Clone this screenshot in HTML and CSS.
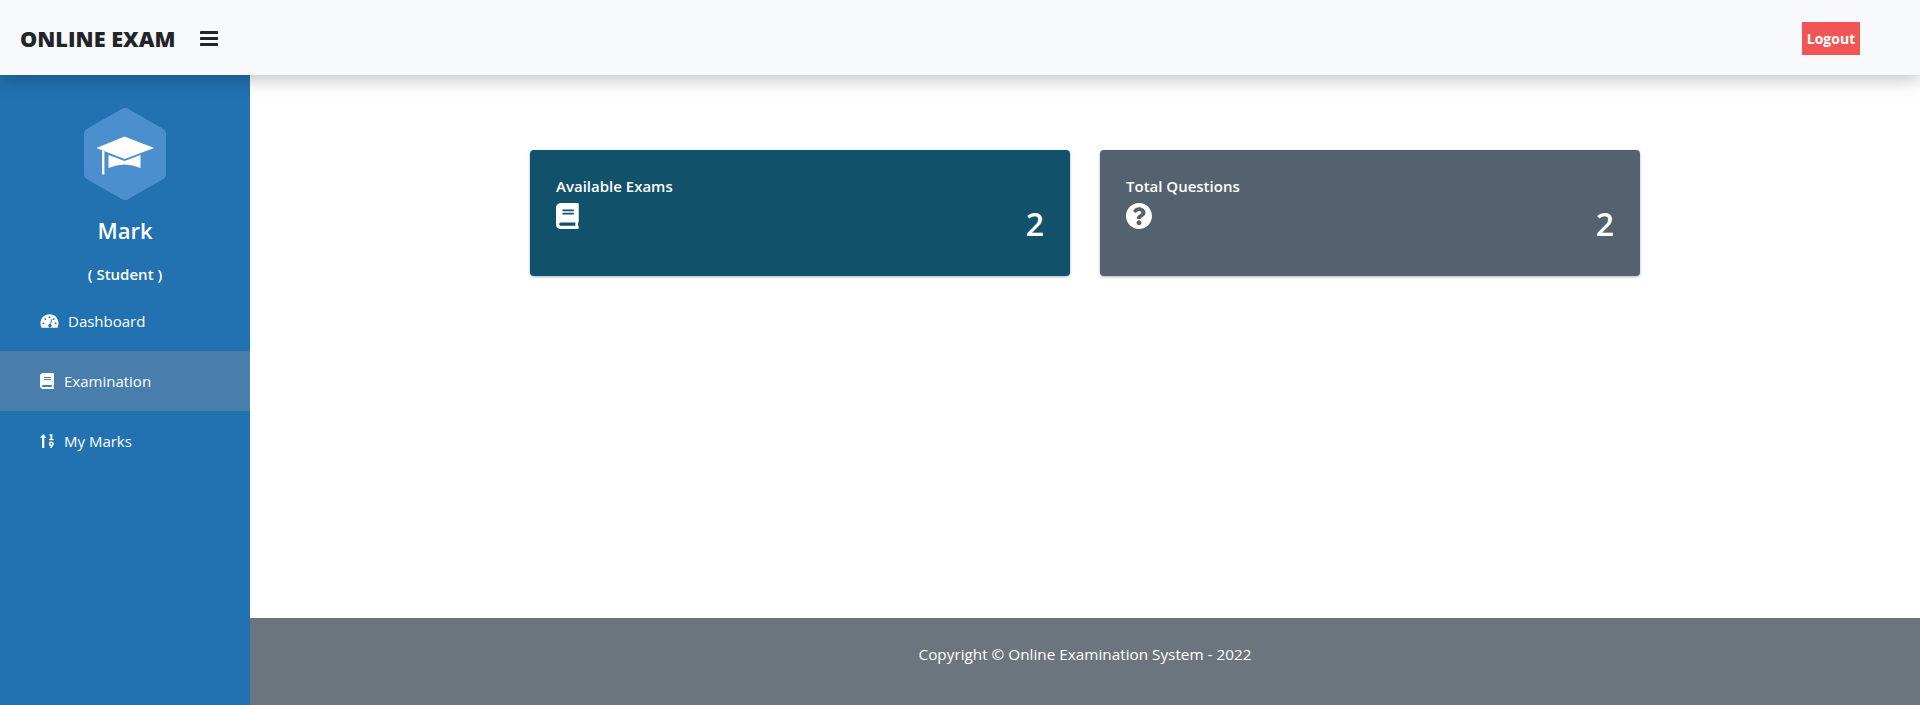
FILE: index.html
```html
<!DOCTYPE html>
<html lang="en">
<head>
    <meta charset="UTF-8">
    <meta name="viewport" content="width=device-width, initial-scale=1.0">
    <title>Online Exam</title>
    <link rel="stylesheet" href="styles.css">
</head>
<body>
    <header class="topbar">
        <span class="brand">ONLINE EXAM</span>
        <svg class="menu-icon" viewBox="0 0 18 15" aria-hidden="true">
            <rect x="0" y="0" width="18" height="3" rx="0.6"/>
            <rect x="0" y="6" width="18" height="3" rx="0.6"/>
            <rect x="0" y="12" width="18" height="3" rx="0.6"/>
        </svg>
        <a class="logout" href="#">Logout</a>
    </header>

    <div class="layout">
        <aside class="sidebar">
            <svg class="avatar" viewBox="0 0 82 92" aria-hidden="true">
                <polygon class="hex" points="41,6 76,26 76,66 41,86 6,66 6,26"/>
                <path class="cap" d="M40.500 28.500 L70 40 L40.500 51 L12.500 40 Z"/>
                <path class="cap" d="M24.500 47 L40.500 53 L56.500 47 V60 Q40.500 53 24.500 60 Z"/>
                <rect class="cap" x="18" y="42.500" width="2.400" height="24"/>
            </svg>
            <div class="user-name">Mark</div>
            <div class="user-role">( Student )</div>
            <nav class="side-nav">
                <a class="side-link" href="#">
                    <svg class="side-icon gauge" viewBox="0 0 20 16" aria-hidden="true">
                        <path fill-rule="evenodd" d="M10 1C4.600 1 .5 5.200.5 10.400c0 1.700.4 3.200 1.100 4.600h16.800c.7-1.400 1.100-2.900 1.100-4.600C19.500 5.200 15.400 1 10 1zM10 3a1 1 0 1 1 0 2 1 1 0 0 1 0-2zM5.500 5a1 1 0 1 1 0 2 1 1 0 0 1 0-2zM14.500 5a1 1 0 1 1 0 2 1 1 0 0 1 0-2zM3.500 9.500a1 1 0 1 1 0 2 1 1 0 0 1 0-2zM16.500 9.500a1 1 0 1 1 0 2 1 1 0 0 1 0-2zM12.200 5.500l.9.3-1.600 5.700a1.700 1.700 0 1 1-.9-.3z"/>
                    </svg>
                    <span>Dashboard</span>
                </a>
                <a class="side-link active" href="#">
                    <svg class="side-icon" viewBox="0 0 448 512" preserveAspectRatio="xMinYMid" aria-hidden="true">
                        <path d="M448 360V24c0-13.300-10.700-24-24-24H96C43 0 0 43 0 96v320c0 53 43 96 96 96h328c13.300 0 24-10.700 24-24v-16c0-7.500-3.500-14.300-8.900-18.700-4.200-15.400-4.200-59.300 0-74.700 5.400-4.300 8.900-11.100 8.900-18.600zM128 134c0-3.300 2.700-6 6-6h212c3.300 0 6 2.700 6 6v20c0 3.300-2.700 6-6 6H134c-3.300 0-6-2.700-6-6v-20zm0 64c0-3.300 2.700-6 6-6h212c3.300 0 6 2.700 6 6v20c0 3.300-2.700 6-6 6H134c-3.300 0-6-2.700-6-6v-20zm253.400 250H96c-17.700 0-32-14.300-32-32 0-17.600 14.400-32 32-32h285.400c-1.900 17.100-1.900 46.900 0 64z"/>
                    </svg>
                    <span>Examination</span>
                </a>
                <a class="side-link" href="#">
                    <svg class="side-icon" viewBox="0 0 15 14" preserveAspectRatio="xMinYMid" aria-hidden="true">
                        <path d="M3.200 0 6.400 3.800H4.300V14H2.100V3.800H0z"/>
                        <path d="M10 0h2.300v5h1.400v1.300H9V5h1.400V1.500H9.200z"/>
                        <path fill-rule="evenodd" d="M11.400 7.500a2.400 2.400 0 0 1 1.500 4.300L11.600 14h-1.500l.8-1.700a2.400 2.400 0 0 1 .5-4.800zm0 1.500a.9.9 0 1 0 0 1.800.9.9 0 0 0 0-1.800z"/>
                    </svg>
                    <span>My Marks</span>
                </a>
            </nav>
        </aside>

        <div class="main">
            <main class="content">
                <section class="stat-card card-teal">
                    <h2 class="stat-title">Available Exams</h2>
                    <svg class="stat-icon" viewBox="0 0 448 512" preserveAspectRatio="xMinYMid" aria-hidden="true">
                        <path d="M448 360V24c0-13.300-10.700-24-24-24H96C43 0 0 43 0 96v320c0 53 43 96 96 96h328c13.300 0 24-10.700 24-24v-16c0-7.500-3.500-14.300-8.900-18.700-4.200-15.400-4.200-59.300 0-74.700 5.400-4.300 8.900-11.100 8.900-18.600zM128 134c0-3.300 2.700-6 6-6h212c3.300 0 6 2.700 6 6v20c0 3.300-2.700 6-6 6H134c-3.300 0-6-2.700-6-6v-20zm0 64c0-3.300 2.700-6 6-6h212c3.300 0 6 2.700 6 6v20c0 3.300-2.700 6-6 6H134c-3.300 0-6-2.700-6-6v-20zm253.400 250H96c-17.700 0-32-14.300-32-32 0-17.600 14.400-32 32-32h285.400c-1.900 17.100-1.900 46.900 0 64z"/>
                    </svg>
                    <div class="stat-value">2</div>
                </section>
                <section class="stat-card card-slate">
                    <h2 class="stat-title">Total Questions</h2>
                    <svg class="stat-icon" viewBox="8 8 496 496" preserveAspectRatio="xMinYMid" aria-hidden="true">
                        <path d="M504 256c0 136.997-111.043 248-248 248S8 392.997 8 256C8 119.083 119.043 8 256 8s248 111.083 248 248zM262.655 90c-54.497 0-89.255 22.957-116.549 63.758-3.536 5.286-2.353 12.415 2.715 16.258l34.699 26.310c5.205 3.947 12.621 3.008 16.665-2.122 17.864-22.658 30.113-35.797 57.303-35.797 20.429 0 45.698 13.148 45.698 32.958 0 14.976-12.363 22.667-32.534 33.976C247.128 238.528 216 254.941 216 296v4c0 6.627 5.373 12 12 12h56c6.627 0 12-5.373 12-12v-1.333c0-28.462 83.186-29.647 83.186-106.667 0-58.002-60.165-102-116.531-102zM256 338c-25.365 0-46 20.635-46 46 0 25.364 20.635 46 46 46s46-20.636 46-46c0-25.365-20.635-46-46-46z"/>
                    </svg>
                    <div class="stat-value">2</div>
                </section>
            </main>
            <footer class="footer">Copyright © Online Examination System - 2022</footer>
        </div>
    </div>
</body>
</html>
```

FILE: styles.css
```css
* {
    box-sizing: border-box;
}
body {
    font-family: "Open Sans", sans-serif;
    margin: 0;
    height: 705px;
    display: flex;
    flex-direction: column;
    overflow: hidden;
    background-color: #fff;
    color: #fff;
}
a {
    color: inherit;
    text-decoration: none;
}

.topbar {
    height: 75px;
    flex: none;
    display: flex;
    align-items: center;
    padding: 2px 60px 0 20px;
    background-color: #f8f9fa;
    box-shadow: 0 4px 18px rgba(0, 0, 0, 0.25);
    position: relative;
    z-index: 2;
}
.brand {
    font-size: 21.700px;
    font-weight: 800;
    color: #212529;
    white-space: nowrap;
}
.menu-icon {
    width: 18px;
    height: 15px;
    margin-left: 25px;
    fill: #212529;
}
.logout {
    margin-left: auto;
    height: 33px;
    width: 58px;
    line-height: 33px;
    white-space: nowrap;
    text-align: center;
    font-size: 14px;
    font-weight: 700;
    background-color: #f25555;
}

.layout {
    flex: 1;
    display: flex;
    min-height: 0;
}

.sidebar {
    width: 250px;
    flex: none;
    padding-top: 33px;
    text-align: center;
    background-color: #2271b1;
}
.avatar {
    display: block;
    width: 82px;
    height: 92px;
    margin: 0 auto;
}
.hex {
    fill: #4b8fce;
    stroke: #4b8fce;
    stroke-width: 12;
    stroke-linejoin: round;
}
.cap {
    fill: #fff;
}
.user-name {
    margin-top: 15px;
    font-size: 22px;
    font-weight: 600;
    line-height: 30px;
}
.user-role {
    margin-top: 19px;
    font-size: 15px;
    font-weight: 600;
    line-height: 20px;
}

.side-nav {
    margin-top: 7px;
}
.side-link {
    height: 60px;
    display: flex;
    align-items: center;
    gap: 9px;
    padding-left: 40px;
    font-size: 15px;
    text-align: left;
}
.side-link.active {
    background-color: #497dab;
}
.side-icon {
    width: 15px;
    height: 16px;
    fill: #fff;
}
.side-icon.gauge {
    width: 19px;
}

.main {
    flex: 1;
    display: flex;
    flex-direction: column;
    min-width: 0;
}
.content {
    flex: 1;
    display: flex;
    justify-content: center;
    align-items: flex-start;
    gap: 30px;
    padding-top: 75px;
}
.stat-card {
    width: 540px;
    height: 126px;
    padding: 25px 26px;
    border-radius: 4px;
    box-shadow: 0 1px 3px rgba(0, 0, 0, 0.3);
    position: relative;
}
.card-teal {
    background-color: #11516a;
}
.card-slate {
    background-color: #54626f;
}
.stat-title {
    margin: 0;
    font-size: 15px;
    font-weight: 600;
    line-height: 22px;
}
.stat-icon {
    display: block;
    height: 26px;
    margin-top: 6px;
    fill: #fff;
}
.stat-value {
    position: absolute;
    right: 26px;
    bottom: 33px;
    font-size: 32px;
    font-weight: 600;
    line-height: 38px;
}

.footer {
    height: 87px;
    flex: none;
    padding-top: 24px;
    text-align: center;
    font-size: 15.300px;
    line-height: 24px;
    background-color: #6c757d;
}
```
